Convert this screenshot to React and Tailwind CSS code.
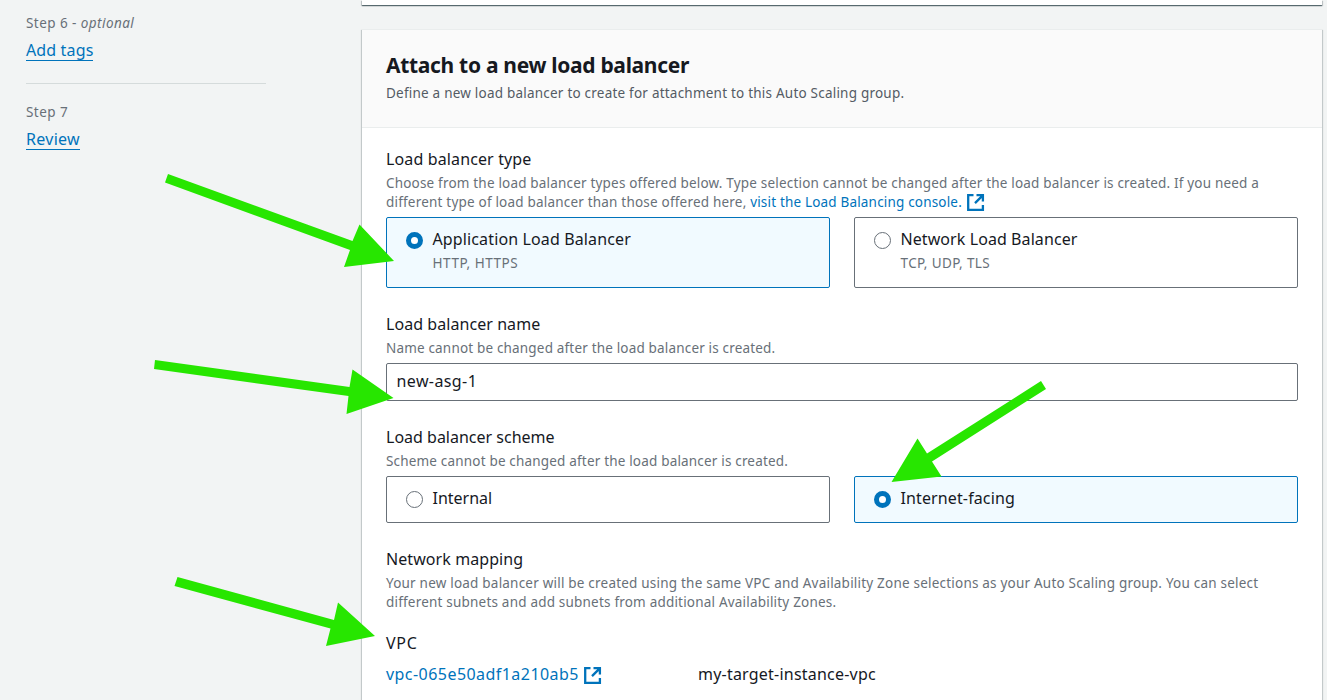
import React from "react";

function ExternalIcon({ className }) {
  return (
    <svg className={`shrink-0 ${className}`} width="18" height="18" viewBox="0 0 18 18" fill="none" stroke="#0073bb" strokeWidth="2.3">
      <path d="M6.5 1.2H1.2v14.7h14.7v-5M9.5 1.2h6.4v6.3M15.5 1.6L8 9.1" />
    </svg>
  );
}

function Radio({ checked }) {
  return checked ? (
    <span className="mt-[1px] h-[17px] w-[17px] shrink-0 rounded-full border-[5px] border-[#0073bb] bg-white" />
  ) : (
    <span className="mt-[1px] h-[17px] w-[17px] shrink-0 rounded-full border border-[#687078] bg-white" />
  );
}

function Tile({ checked, title, titleClass = "", hint, hintClass = "", className }) {
  return (
    <div
      className={`flex flex-1 items-start rounded-[2px] border pl-[19px] pt-[13px] ${
        checked ? "border-[#0073bb] bg-[#f1faff]" : "border-[#687078] bg-white"
      } ${className}`}
    >
      <Radio checked={checked} />
      <div className="-mt-[3px] ml-[9.5px]">
        <div className={`text-[16px] leading-[22px] ${titleClass}`}>{title}</div>
        {hint && <div className={`mt-[4px] text-[13.5px] leading-[19px] text-[#687078] ${hintClass}`}>{hint}</div>}
      </div>
    </div>
  );
}

function Label({ children, className = "" }) {
  return <div className={`text-[16px] leading-[22px] ${className}`}>{children}</div>;
}

function Hint({ children, className = "tracking-[0.187px]" }) {
  return <div className={`whitespace-pre text-[13.5px] leading-[19px] text-[#687078] ${className}`}>{children}</div>;
}

function Arrow({ points }) {
  return <polygon points={points} fill="#27e600" />;
}

export default function App() {
  return (
    <div className="relative flex h-[700px] w-[1327px] overflow-hidden bg-[#f2f4f4] font-['Noto_Sans',sans-serif] text-[#16191f]">
      <aside className="ml-[26px] w-[240px] shrink-0 pt-[13px]">
        <div className="border-b border-[#d5dbdb] pb-[22px]">
          <div className="text-[13.5px] leading-5 tracking-[0.44px] text-[#687078]">
            Step 6 - <i>optional</i>
          </div>
          <div className="mt-[6px] flex">
            <a className="h-[22px] border-b border-[#0073bb] text-[16px] leading-[22px] tracking-[0.14px] text-[#0073bb]">Add tags</a>
          </div>
        </div>
        <div className="pt-[18px]">
          <div className="text-[13.5px] leading-5 tracking-[0.44px] text-[#687078]">Step 7</div>
          <div className="mt-[6px] flex">
            <a className="h-[22px] border-b border-[#0073bb] text-[16px] leading-[22px] tracking-[0.3px] text-[#0073bb]">Review</a>
          </div>
        </div>
      </aside>

      <main className="ml-[96px] flex w-[960px] shrink-0 flex-col">
        <div className="h-[5px] shrink-0 bg-white shadow-[0_1px_1px_0_rgba(0,28,36,0.5),1px_1px_1px_0_rgba(0,28,36,0.15),-1px_1px_1px_0_rgba(0,28,36,0.15)]" />
        <section className="mt-[24px] h-[720px] shrink-0 bg-white shadow-[0_1px_1px_0_rgba(0,28,36,0.3),1px_1px_1px_0_rgba(0,28,36,0.15),-1px_1px_1px_0_rgba(0,28,36,0.15)]">
          <header className="h-[99px] border-b border-t border-[#eaeded] bg-[#fafafa] px-6 pt-[21px]">
            <h1 className="text-[21px] font-bold leading-[28px] tracking-[-0.31px]">Attach to a new load balancer</h1>
            <p className="mt-[4px] text-[13.5px] leading-5 tracking-[0.22px] text-[#545b64]">
              Define a new load balancer to create for attachment to this Auto Scaling group.
            </p>
          </header>
          <div className="px-6 pt-[20px]">
            <Label className="tracking-[0.13px]">Load balancer type</Label>
            <div className="mt-[4px]">
              <Hint>
                Choose from the load balancer types offered below. Type selection cannot be changed after the load balancer is created. If you need a
              </Hint>
              <div className="flex">
                <Hint className="tracking-[0.2px]">different type of load balancer than those offered here, </Hint>
                <a className="text-[13.5px] leading-[19px] tracking-[0.18px] text-[#0073bb]">visit the Load Balancing console.</a>
                <ExternalIcon className="-mb-[1px] ml-[5px] mt-[1px]" />
              </div>
            </div>
            <div className="mt-[5px] flex gap-6">
              <Tile checked title="Application Load Balancer" titleClass="tracking-[0.13px]" hint="HTTP, HTTPS" hintClass="tracking-[0.55px]" className="h-[71px]" />
              <Tile title="Network Load Balancer" titleClass="tracking-[0.08px]" hint="TCP, UDP, TLS" hintClass="tracking-[0.39px]" className="h-[71px]" />
            </div>
            <div className="mt-[25px]">
              <Label className="tracking-[0.06px]">Load balancer name</Label>
              <Hint className="mt-[4px] tracking-[0.175px]">Name cannot be changed after the load balancer is created.</Hint>
              <div className="mt-[5px] h-[38px] rounded-[2px] border border-[#687078] bg-white pl-[9.5px] pt-[6px] text-[16px] leading-[22px] tracking-[0.4px]">
                new-asg-1
              </div>
            </div>
            <div className="mt-[25px]">
              <Label>Load balancer scheme</Label>
              <Hint className="mt-[4px] tracking-[0.18px]">Scheme cannot be changed after the load balancer is created.</Hint>
              <div className="mt-[5px] flex gap-6">
                <Tile title="Internal" className="h-[47px]" />
                <Tile checked title="Internet-facing" titleClass="tracking-[0.12px]" className="h-[47px]" />
              </div>
            </div>
            <div className="mt-[25px]">
              <Label className="tracking-[0.08px]">Network mapping</Label>
              <Hint className="mt-[4px] tracking-[0.21px]">
                Your new load balancer will be created using the same VPC and Availability Zone selections as your Auto Scaling group. You can select
              </Hint>
              <Hint className="tracking-[0.2px]">different subnets and add subnets from additional Availability Zones.</Hint>
            </div>
            <div className="mt-[20px]">
              <Label className="tracking-[0.7px]">VPC</Label>
              <div className="mt-[9px] flex text-[16px] leading-[22px]">
                <div className="flex w-[312px]">
                  <a className="tracking-[0.45px] text-[#0073bb]">vpc-065e50adf1a210ab5</a>
                  <ExternalIcon className="ml-[5px] mt-[4px]" />
                </div>
                <span className="tracking-[0.22px]">my-target-instance-vpc</span>
              </div>
            </div>
          </div>
        </section>
      </main>

      <svg className="pointer-events-none absolute inset-0" width="1327" height="700">
        <Arrow points="168,174 352.5,241 359.5,224.5 394,261 344,267 350,250 165,182.5" />
        <Arrow points="155,360 349.5,387 352.5,369.5 393.5,398 346.5,414 348.5,396 154,369" />
        <Arrow points="1041,381 927,453.5 917.5,438.5 891.5,482 941.5,476.5 932,461.5 1046,389" />
        <Arrow points="177.5,577 334,620 338,602.5 375,636 326,646 330.5,628.5 174.5,586" />
      </svg>
    </div>
  );
}
